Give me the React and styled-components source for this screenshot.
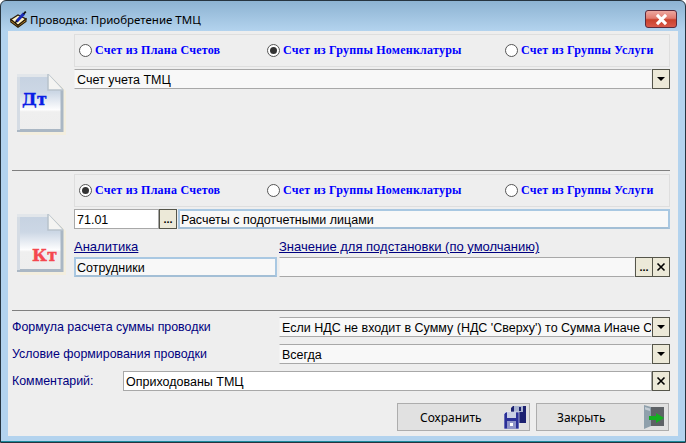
import React from 'react'
import styled, { createGlobalStyle } from 'styled-components'

const Global = createGlobalStyle`
    html, body { margin: 0; padding: 0; background: #fff; }
    * { box-sizing: border-box; }
`

const uiFont = `"Liberation Sans", sans-serif`

const Win = styled.div`
    width: 686px; height: 443px; display: flex; flex-direction: column;
    border: 1px solid #26343f; border-radius: 6px 6px 0 0; padding: 0 7px 6px;
    background: linear-gradient(#8db3d2 0, #b3d3ee 30px); font: 12.5px ${uiFont}; color: #000;
    box-shadow: inset 0 -1px 0 #1c8a9c;
`

const TitleBar = styled.div`
    height: 30px; flex: none; display: flex; align-items: center; padding-top: 6px; padding-left: 2px; gap: 3px;
    font: 11.5px "Noto Sans", sans-serif;
`

const TitleText = styled.span` flex: 1; `

const CloseBtn = styled.div`
    width: 32px; height: 18px; margin-right: 1px; margin-top: 3px; align-self: flex-start; display: flex; align-items: center; justify-content: center;
    border: 1px solid #5b2a3c; border-radius: 3px;
    background: linear-gradient(#eda79f 0, #e27c70 45%, #c9412c 55%, #d9594a 100%);
`

const Client = styled.div`
    flex: 1; display: flex; flex-direction: column; padding: 3px 8px 0 4px; background: #eee;
`

const Section = styled.div`
    height: 136px; flex: none; display: flex;
`

const DocSlot = styled.div`
    width: 62px; flex: none; padding: 40px 0 0 5px;
`

const SectionBody = styled.div`
    flex: 1; min-width: 0; display: flex; flex-direction: column;
`

const Rule = styled.div`
    height: 1px; flex: none; background: #808080; margin-bottom: ${p => p.$after}px;
`

const RadioGroup = styled.div`
    height: 33px; flex: none; margin-bottom: 2px; padding-left: 4px; display: grid; grid-template-columns: 188px 238px 1fr; align-items: center;
    border: 1px solid #dedede;
`

const RadioItem = styled.label`
    display: flex; align-items: center; gap: 3px;
    font: bold 12px "Liberation Serif", serif; color: #0000ff; letter-spacing: 0.23px;
`

const RadioMark = styled.span`
    width: 13px; height: 13px; flex: none; border-radius: 50%; border: 1px solid #555; background: #fff;
    display: flex; align-items: center; justify-content: center;
    &::after {
        content: ""; width: 7px; height: 7px; border-radius: 50%; background: #333;
        display: ${p => (p.$on ? 'block' : 'none')};
    }
`

const FieldRow = styled.div`
    height: 20px; flex: none; min-width: 0; display: flex;
`

const Field = styled.div`
    flex: ${p => (p.$width ? `0 0 ${p.$width}px` : '1')}; min-width: 0; height: 20px; padding: 1px 0 0 2px;
    display: flex; align-items: center; white-space: nowrap; overflow: hidden;
    background: ${p => (p.$white ? '#fff' : '#f8f8f8')};
    border: 1px solid ${p => (p.$white ? '#a8a8a8' : '#f2f2f2')};
    border-top-color: #a8a8a8; border-bottom-color: #a8a8a8;
`

const ActiveField = styled(Field)`
    padding-left: 1px; margin-left: ${p => p.$left || 0}px;
    border: 2px solid #a9c8e2; border-bottom-color: #a3bfd6;
`

const SmallBtn = styled.div`
    width: ${p => p.$w || 18}px; height: 20px; flex: none; display: flex; align-items: center; justify-content: center;
    background: #ece9d8; border: 1px solid #55554a; margin-left: ${p => p.$overlap ? -1 : 0}px;
`

const Dots = styled.span`
    font: bold 11px ${uiFont}; line-height: 1; letter-spacing: 0; margin-top: 1px;
`

const Arrow = styled.span`
    width: 0; height: 0; border: 4px solid transparent; border-top: 4px solid #000; border-bottom: 0;
`

const Analytics = styled.div`
    display: grid; grid-template-columns: 203px minmax(0, 1fr); column-gap: 2px;
`

const AnalyticsCol = styled.div`
    display: flex; flex-direction: column; min-width: 0;
`

const LinkLabel = styled.a`
    height: 28px; padding-top: 10px; font: 13px ${uiFont}; color: #000080; text-decoration: underline;
`

const Form = styled.div`
    display: flex; flex-direction: column; gap: 7px; padding-top: 6px;
`

const FormRow = styled.div`
    display: grid; grid-template-columns: ${p => p.$label}px minmax(0, 1fr); align-items: center; height: 20px;
`

const FormLabel = styled.span`
    color: #000080; white-space: nowrap; font-size: 12.4px;
`

const Footer = styled.div`
    margin-top: 12px; padding-right: 1px; display: flex; justify-content: flex-end; gap: 6px;
`

const ActionBtn = styled.div`
    width: 133px; height: 28px; display: flex; align-items: center; padding-right: ${p => p.$right}px;
    background: #e1e1e1; border: 1px solid #adadad; font: 12px "Noto Sans", sans-serif;
`

const ActionText = styled.span`
    flex: 1; padding-left: ${p => p.$pad}px;
`

function XMark({ size = 10, color = '#000', width = 1.6 }) {
    return (
        <svg width={size} height={size} viewBox="0 0 10 10">
            <path d="M1.5 1.5 L8.5 8.5 M8.5 1.5 L1.5 8.5" stroke={color} strokeWidth={width} fill="none" />
        </svg>
    )
}

function TitleIcon() {
    return (
        <svg width="17" height="17" viewBox="0 0 17 17">
            <path d="M.8 8.5 L8 4 L16 8 L8 14.5 Z" fill="#fff3c4" stroke="#2a1c08" strokeWidth="1.3" />
            <path d="M.8 8.5 V11 L8 16.3 L16 10.5 V8 L8 14.5 Z" fill="#e0a63c" stroke="#2a1c08" strokeWidth="1.1" />
            <path d="M6.5 10.5 L14 2.5" stroke="#1a2ab8" strokeWidth="3" />
            <path d="M13.5 3 L15.8 .6" stroke="#111" strokeWidth="1.8" />
            <path d="M5 12 L7 9.8" stroke="#111" strokeWidth="1.4" />
        </svg>
    )
}

function DocIcon({ id, children }) {
    return (
        <svg width="50" height="62" viewBox="0 0 50 62">
            <defs>
                <linearGradient id={id} x1="0" y1="0" x2="0" y2="1">
                    <stop offset="0" stopColor="#c6d2e1" />
                    <stop offset="0.3" stopColor="#ccd7e5" />
                    <stop offset="0.62" stopColor="#fdfdfe" />
                    <stop offset="0.66" stopColor="#efefef" />
                    <stop offset="1" stopColor="#eeeeee" />
                </linearGradient>
            </defs>
            <path d="M3 3 H35 L49 17 V61 H3 Z" fill="#f3eede" />
            <path d="M1.5 1.5 H31 L45 16 V56.5 H1.5 Z" fill={`url(#${id})`} stroke="#aab7c4" strokeWidth="3" />
            <path d="M0 0 H3 V56 H0 Z" fill="#d5dce4" />
            <path d="M0 0 H31 V3 H0 Z" fill="#e2e6ea" />
            <path d="M31 0 L46 16 H31 Z" fill="#f4f4f2" />
            <path d="M31 0 V16 H46" fill="none" stroke="#b8c2cc" strokeWidth="1.5" />
            {children}
        </svg>
    )
}

function FloppyIcon() {
    const disk = 'M0 2 L2 0 H15 V17 H0 Z'
    return (
        <svg width="22" height="23" viewBox="0 0 22 23">
            <g transform="translate(7 0)">
                <path d={disk} fill="#1c2170" />
                <path d="M3 0 H12 V6 H3 Z" fill="#aab4d0" />
                <path d="M8 1 H10 V5 H8 Z" fill="#1c2170" />
            </g>
            <g transform="translate(0 6)">
                <path d={disk} fill="#2a2f96" stroke="#eef" strokeWidth="0.6" />
                <path d="M3 0 H12 V6 H3 Z" fill="#c9cfe4" />
                <path d="M3 9 H12 V17 H3 Z" fill="#8f94c8" />
                <path d="M6 11 H9 V14 H6 Z" fill="#fff" />
            </g>
        </svg>
    )
}

function DoorIcon() {
    return (
        <svg width="20" height="24" viewBox="0 0 20 24">
            <path d="M3 2 H20 V21 H3 Z" fill="#5e6266" />
            <path d="M0 0 L7 2 V21 L0 24 Z" fill="#8fa0ac" />
            <path d="M1 2 L6 3.5 V6 L1 4.5 Z" fill="#c3ccd4" />
            <path d="M5 11 H12 V8 L20 13 L12 18 V15 H5 Z" fill="#12b020" />
        </svg>
    )
}

function Radio({ on, children }) {
    return (
        <RadioItem>
            <RadioMark $on={on} />
            {children}
        </RadioItem>
    )
}

function AccountRadios({ active }) {
    return (
        <RadioGroup>
            <Radio on={active === 0}>Счет из Плана Счетов</Radio>
            <Radio on={active === 1}>Счет из Группы Номенклатуры</Radio>
            <Radio on={active === 2}>Счет из Группы Услуги</Radio>
        </RadioGroup>
    )
}

export default function App() {
    return (
        <>
            <Global />
            <Win>
                <TitleBar>
                    <TitleIcon />
                    <TitleText>Проводка: Приобретение ТМЦ</TitleText>
                    <CloseBtn><XMark size={13} color="#fff" width={2.4} /></CloseBtn>
                </TitleBar>
                <Client>
                    <Section>
                        <DocSlot>
                            <DocIcon id="dt">
                                <text x="5" y="31" fontFamily="DejaVu Serif" fontWeight="bold" fontSize="16.5" fill="#0a1ee6" stroke="#0a1ee6" strokeWidth="0.4">Дт</text>
                            </DocIcon>
                        </DocSlot>
                        <SectionBody>
                            <AccountRadios active={1} />
                            <FieldRow>
                                <Field>Счет учета ТМЦ</Field>
                                <SmallBtn><Arrow /></SmallBtn>
                            </FieldRow>
                        </SectionBody>
                    </Section>
                    <Rule $after={3} />
                    <Section>
                        <DocSlot>
                            <DocIcon id="kt">
                                <text x="15" y="47" fontFamily="DejaVu Serif" fontWeight="bold" fontSize="16.5" fill="#f5474f" stroke="#f5474f" strokeWidth="0.4">Кт</text>
                            </DocIcon>
                        </DocSlot>
                        <SectionBody>
                            <AccountRadios active={0} />
                            <FieldRow>
                                <Field $white $width={85}>71.01</Field>
                                <SmallBtn><Dots>...</Dots></SmallBtn>
                                <ActiveField $left={1}>Расчеты с подотчетными лицами</ActiveField>
                            </FieldRow>
                            <Analytics>
                                <AnalyticsCol>
                                    <LinkLabel>Аналитика</LinkLabel>
                                    <ActiveField>Сотрудники</ActiveField>
                                </AnalyticsCol>
                                <AnalyticsCol>
                                    <LinkLabel>Значение для подстановки (по умолчанию)</LinkLabel>
                                    <FieldRow>
                                        <Field />
                                        <SmallBtn $w={18}><Dots>...</Dots></SmallBtn>
                                        <SmallBtn $overlap><XMark /></SmallBtn>
                                    </FieldRow>
                                </AnalyticsCol>
                            </Analytics>
                        </SectionBody>
                    </Section>
                    <Rule $after={0} />
                    <Form>
                        <FormRow $label={267}>
                            <FormLabel>Формула расчета суммы проводки</FormLabel>
                            <FieldRow>
                                <Field>Если НДС не входит в Сумму (НДС 'Сверху') то Сумма Иначе С</Field>
                                <SmallBtn><Arrow /></SmallBtn>
                            </FieldRow>
                        </FormRow>
                        <FormRow $label={267}>
                            <FormLabel>Условие формирования проводки</FormLabel>
                            <FieldRow>
                                <Field>Всегда</Field>
                                <SmallBtn><Arrow /></SmallBtn>
                            </FieldRow>
                        </FormRow>
                        <FormRow $label={111}>
                            <FormLabel>Комментарий:</FormLabel>
                            <FieldRow>
                                <Field $white>Оприходованы ТМЦ</Field>
                                <SmallBtn><XMark /></SmallBtn>
                            </FieldRow>
                        </FormRow>
                    </Form>
                    <Footer>
                        <ActionBtn $right={3}>
                            <ActionText $pad={22}>Сохранить</ActionText>
                            <FloppyIcon />
                        </ActionBtn>
                        <ActionBtn $right={4}>
                            <ActionText $pad={20}>Закрыть</ActionText>
                            <DoorIcon />
                        </ActionBtn>
                    </Footer>
                </Client>
            </Win>
        </>
    )
}
